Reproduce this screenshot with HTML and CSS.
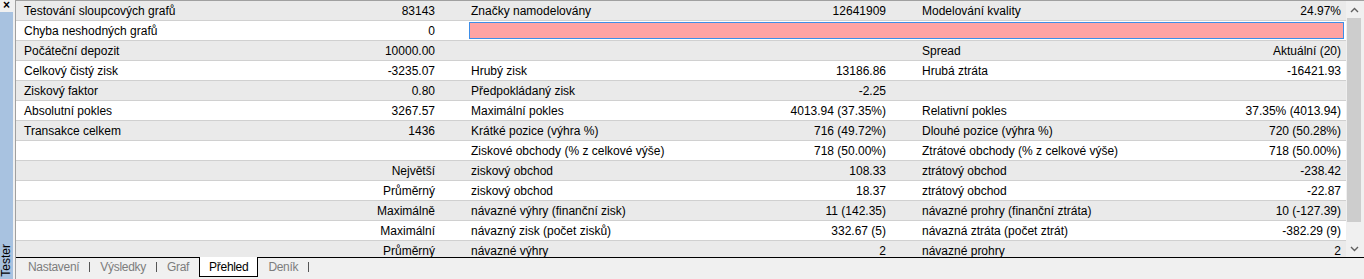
FILE: index.html
```html
<!DOCTYPE html>
<html lang="cs">
<head>
  <meta charset="UTF-8" />
  <title>Tester - Přehled</title>
  <link rel="stylesheet" href="styles.css">
</head>
<body>
  <div class="window">
    <aside class="sidebar">
      <div class="close">×</div>
      <div class="side-tab"><span>Tester</span></div>
    </aside>

    <main class="panel">
      <div class="report">
        <div class="table">
          <div class="row alt">
            <div class="lbl">Testování sloupcových grafů</div><div class="val">83143</div>
            <div class="lbl">Značky namodelovány</div><div class="val">12641909</div>
            <div class="lbl">Modelování kvality</div><div class="val">24.97%</div>
          </div>
          <div class="row">
            <div class="lbl">Chyba neshodných grafů</div><div class="val">0</div>
            <div class="quality"><div class="bar"></div></div>
          </div>
          <div class="row alt">
            <div class="lbl">Počáteční depozit</div><div class="val">10000.00</div>
            <div class="lbl"></div><div class="val"></div>
            <div class="lbl">Spread</div><div class="val">Aktuální (20)</div>
          </div>
          <div class="row">
            <div class="lbl">Celkový čistý zisk</div><div class="val">-3235.07</div>
            <div class="lbl">Hrubý zisk</div><div class="val">13186.86</div>
            <div class="lbl">Hrubá ztráta</div><div class="val">-16421.93</div>
          </div>
          <div class="row alt">
            <div class="lbl">Ziskový faktor</div><div class="val">0.80</div>
            <div class="lbl">Předpokládaný zisk</div><div class="val">-2.25</div>
            <div class="lbl"></div><div class="val"></div>
          </div>
          <div class="row">
            <div class="lbl">Absolutní pokles</div><div class="val">3267.57</div>
            <div class="lbl">Maximální pokles</div><div class="val">4013.94 (37.35%)</div>
            <div class="lbl">Relativní pokles</div><div class="val">37.35% (4013.94)</div>
          </div>
          <div class="row alt">
            <div class="lbl">Transakce celkem</div><div class="val">1436</div>
            <div class="lbl">Krátké pozice (výhra %)</div><div class="val">716 (49.72%)</div>
            <div class="lbl">Dlouhé pozice (výhra %)</div><div class="val">720 (50.28%)</div>
          </div>
          <div class="row">
            <div class="lbl"></div><div class="val"></div>
            <div class="lbl">Ziskové obchody (% z celkové výše)</div><div class="val">718 (50.00%)</div>
            <div class="lbl">Ztrátové obchody (% z celkové výše)</div><div class="val">718 (50.00%)</div>
          </div>
          <div class="row alt">
            <div class="lbl"></div><div class="val">Největší</div>
            <div class="lbl">ziskový obchod</div><div class="val">108.33</div>
            <div class="lbl">ztrátový obchod</div><div class="val">-238.42</div>
          </div>
          <div class="row">
            <div class="lbl"></div><div class="val">Průměrný</div>
            <div class="lbl">ziskový obchod</div><div class="val">18.37</div>
            <div class="lbl">ztrátový obchod</div><div class="val">-22.87</div>
          </div>
          <div class="row alt">
            <div class="lbl"></div><div class="val">Maximálně</div>
            <div class="lbl">návazné výhry (finanční zisk)</div><div class="val">11 (142.35)</div>
            <div class="lbl">návazné prohry (finanční ztráta)</div><div class="val">10 (-127.39)</div>
          </div>
          <div class="row">
            <div class="lbl"></div><div class="val">Maximální</div>
            <div class="lbl">návazný zisk (počet zisků)</div><div class="val">332.67 (5)</div>
            <div class="lbl">návazná ztráta (počet ztrát)</div><div class="val">-382.29 (9)</div>
          </div>
          <div class="row alt">
            <div class="lbl"></div><div class="val">Průměrný</div>
            <div class="lbl">návazné výhry</div><div class="val">2</div>
            <div class="lbl">návazné prohry</div><div class="val">2</div>
          </div>
        </div>

        <div class="scrollbar">
          <div class="arrow">
            <svg width="9" height="6" viewBox="0 0 9 6"><path d="M1 5 L4.5 1.5 L8 5" fill="none" stroke="#606060" stroke-width="1.4"/></svg>
          </div>
          <div class="thumb"></div>
          <div class="track"></div>
          <div class="arrow">
            <svg width="9" height="6" viewBox="0 0 9 6"><path d="M1 1 L4.5 4.5 L8 1" fill="none" stroke="#606060" stroke-width="1.4"/></svg>
          </div>
        </div>
      </div>

      <div class="tabs">
        <div class="tab">Nastavení</div><span class="sep"></span>
        <div class="tab">Výsledky</div><span class="sep"></span>
        <div class="tab">Graf</div>
        <div class="tab active">Přehled</div>
        <div class="tab">Deník</div><span class="sep"></span>
      </div>
    </main>
  </div>
</body>
</html>
```

FILE: styles.css
```css
body {
  margin: 0;
  font-family: 'Liberation Sans', Arial, sans-serif;
  font-size: 12px;
  color: #000;
  background: #f0f0f0;
  overflow: hidden;
}
.window {
  display: flex;
  width: 1364px;
  height: 279px;
}

/* levy svisly panel */
.sidebar {
  width: 15px;
  border-right: 1px solid #a0a0a0;
  display: flex;
  flex-direction: column;
  background: #f0f0f0;
}
.close {
  width: 13px;
  height: 12px;
  line-height: 10px;
  text-align: center;
  font-weight: bold;
  font-size: 12px;
}
.side-tab {
  flex: 1;
  width: 13px;
  background: #a8c2e0;
  display: flex;
  align-items: flex-end;
  justify-content: center;
}
.side-tab span {
  writing-mode: vertical-rl;
  transform: rotate(180deg);
  padding-top: 2px;
  line-height: 13px;
}

.panel {
  flex: 1;
  display: flex;
  flex-direction: column;
  min-width: 0;
}
.report {
  height: 256px;
  border-top: 1px solid #a0a0a0;
  display: flex;
  background: #fff;
  overflow: hidden;
}
.table {
  flex: 1;
  overflow: hidden;
}
.row {
  display: grid;
  grid-template-columns: 224px 223px 217px 234px 216px 216px;
  height: 19px;
  border-bottom: 1px solid #d0d0d0;
  background: #fff;
}
.row.alt {
  background: #eaeaea;
}
.lbl, .val {
  height: 19px;
  line-height: 21px;
  white-space: nowrap;
  overflow: hidden;
}
.lbl {
  padding-left: 8px;
}
.val {
  text-align: right;
  padding-right: 28px;
}
.val:last-child {
  padding-right: 5px;
}
.quality {
  grid-column: 3 / span 4;
}
.bar {
  margin: 1px 2px 0 6px;
  height: 15px;
  border: 1px solid #3d8ee8;
  background: #ffa3a3;
}

.scrollbar {
  width: 18px;
  background: #f0f0f0;
  display: flex;
  flex-direction: column;
}
.arrow {
  height: 17px;
  display: flex;
  align-items: center;
  justify-content: center;
  padding-right: 2px;
}
.thumb {
  margin-left: 1px;
  width: 14px;
  height: 204px;
  background: #cdcdcd;
}
.track {
  flex: 1;
}

/* spodni zalozky */
.tabs {
  display: flex;
  align-items: flex-start;
  height: 21px;
  padding-left: 2px;
  border-top: 1px solid #000;
  background: #f0f0f0;
}
.tab {
  padding: 0 10px;
  line-height: 19px;
  letter-spacing: -0.3px;
  color: #7d7d7d;
}
.tab.active {
  margin-top: -1px;
  padding: 1px 9px 0;
  line-height: 18px;
  color: #000;
  background: #fff;
  border: 1px solid #000;
  border-top: none;
}
.sep {
  width: 1px;
  height: 10px;
  margin-top: 4px;
  background: #555;
}
```
